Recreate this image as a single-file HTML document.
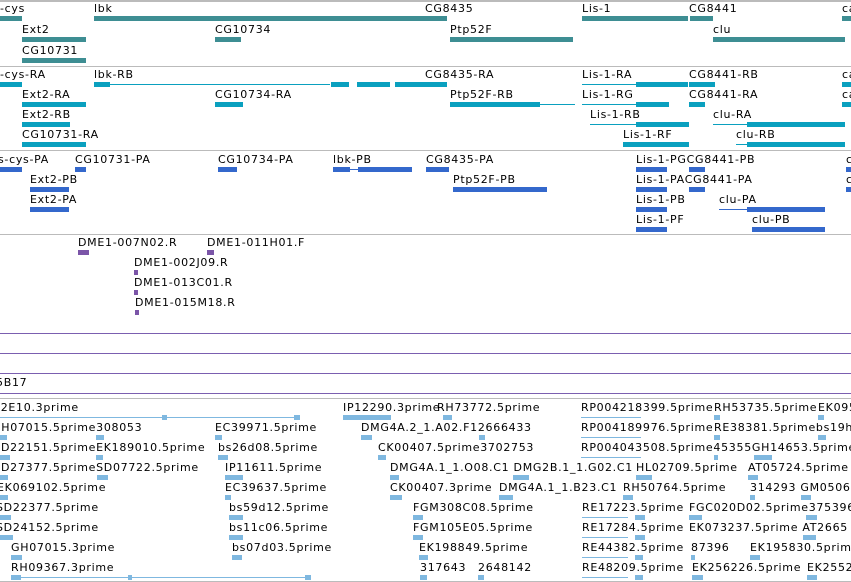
<!DOCTYPE html>
<html><head><style>
body{margin:0;width:851px;height:582px;overflow:hidden;background:#fff;position:relative;font-family:"DejaVu Sans","Liberation Sans",sans-serif}
.t{position:absolute;font-size:11px;line-height:11px;letter-spacing:0.7px;white-space:nowrap;color:#000}
.b{position:absolute;height:5px}
.g{background:#3e8e93}.r{background:#0aa0bf}.p{background:#3468cc}.v{background:#7b55a8}.e{background:#7fb8e0}
.l{position:absolute;height:1px}
.h{position:absolute;left:0;width:851px;height:1px}
</style></head><body>
<div class="h" style="top:0;background:#bbb;height:2px"></div>
<div class="h" style="top:66px;background:#bbb"></div>
<div class="h" style="top:150px;background:#bbb"></div>
<div class="h" style="top:234px;background:#bbb"></div>
<div class="h" style="top:333px;background:#7b5fb0"></div>
<div class="h" style="top:353px;background:#7b5fb0"></div>
<div class="h" style="top:373px;background:#7b5fb0"></div>
<div class="h" style="top:393px;background:#7b5fb0"></div>
<div class="h" style="top:398px;background:#bbb"></div>
<div class="h" style="top:581px;background:#bbb"></div>

<div class="t" style="left:0;top:3px">-cys</div><div class="b g" style="left:0;top:16px;width:22px"></div>
<div class="t" style="left:94px;top:3px">lbk</div><div class="b g" style="left:94px;top:16px;width:330px"></div>
<div class="t" style="left:425px;top:3px">CG8435</div><div class="b g" style="left:422px;top:16px;width:25px"></div>
<div class="t" style="left:582px;top:3px">Lis-1</div><div class="b g" style="left:582px;top:16px;width:106px"></div>
<div class="t" style="left:689px;top:3px">CG8441</div><div class="b g" style="left:690px;top:16px;width:23px"></div>
<div class="t" style="left:842px;top:3px">ca</div><div class="b g" style="left:842px;top:16px;width:9px"></div>
<div class="t" style="left:22px;top:24px">Ext2</div><div class="b g" style="left:22px;top:37px;width:64px"></div>
<div class="t" style="left:215px;top:24px">CG10734</div><div class="b g" style="left:215px;top:37px;width:26px"></div>
<div class="t" style="left:450px;top:24px">Ptp52F</div><div class="b g" style="left:450px;top:37px;width:123px"></div>
<div class="t" style="left:713px;top:24px">clu</div><div class="b g" style="left:713px;top:37px;width:132px"></div>
<div class="t" style="left:22px;top:45px">CG10731</div><div class="b g" style="left:22px;top:58px;width:64px"></div>

<div class="t" style="left:0;top:69px">-cys-RA</div><div class="b r" style="left:0;top:82px;width:22px"></div>
<div class="t" style="left:94px;top:69px">lbk-RB</div><div class="b r" style="left:94px;top:82px;width:16px"></div><div class="l r" style="left:110px;top:84px;width:220px"></div><div class="b r" style="left:331px;top:82px;width:18px"></div><div class="b r" style="left:357px;top:82px;width:33px"></div><div class="b r" style="left:395px;top:82px;width:29px"></div>
<div class="t" style="left:425px;top:69px">CG8435-RA</div><div class="b r" style="left:422px;top:82px;width:25px"></div>
<div class="t" style="left:582px;top:69px">Lis-1-RA</div><div class="l r" style="left:582px;top:84px;width:54px"></div><div class="b r" style="left:636px;top:82px;width:52px"></div>
<div class="t" style="left:689px;top:69px">CG8441-RB</div><div class="b r" style="left:689px;top:82px;width:26px"></div>
<div class="t" style="left:842px;top:69px">ca</div><div class="b r" style="left:842px;top:82px;width:9px"></div>

<div class="t" style="left:22px;top:89px">Ext2-RA</div><div class="b r" style="left:22px;top:102px;width:64px"></div>
<div class="t" style="left:215px;top:89px">CG10734-RA</div><div class="b r" style="left:215px;top:102px;width:28px"></div>
<div class="t" style="left:450px;top:89px">Ptp52F-RB</div><div class="b r" style="left:450px;top:102px;width:90px"></div><div class="l r" style="left:540px;top:104px;width:35px"></div>
<div class="t" style="left:582px;top:89px">Lis-1-RG</div><div class="l r" style="left:582px;top:104px;width:54px"></div><div class="b r" style="left:636px;top:102px;width:33px"></div>
<div class="t" style="left:689px;top:89px">CG8441-RA</div><div class="b r" style="left:689px;top:102px;width:16px"></div>
<div class="t" style="left:842px;top:89px">ca</div><div class="b r" style="left:842px;top:102px;width:9px"></div>

<div class="t" style="left:22px;top:109px">Ext2-RB</div><div class="b r" style="left:22px;top:122px;width:48px"></div>
<div class="t" style="left:590px;top:109px">Lis-1-RB</div><div class="l r" style="left:590px;top:124px;width:46px"></div><div class="b r" style="left:636px;top:122px;width:53px"></div>
<div class="t" style="left:713px;top:109px">clu-RA</div><div class="l r" style="left:713px;top:124px;width:34px"></div><div class="b r" style="left:747px;top:122px;width:98px"></div>

<div class="t" style="left:22px;top:129px">CG10731-RA</div><div class="b r" style="left:22px;top:142px;width:64px"></div>
<div class="t" style="left:623px;top:129px">Lis-1-RF</div><div class="b r" style="left:623px;top:142px;width:66px"></div>
<div class="t" style="left:736px;top:129px">clu-RB</div><div class="l r" style="left:736px;top:144px;width:11px"></div><div class="b r" style="left:747px;top:142px;width:98px"></div>

<div class="t" style="left:-2px;top:154px">s-cys-PA</div><div class="b p" style="left:0;top:167px;width:22px"></div>
<div class="t" style="left:75px;top:154px">CG10731-PA</div><div class="b p" style="left:75px;top:167px;width:11px"></div>
<div class="t" style="left:218px;top:154px">CG10734-PA</div><div class="b p" style="left:218px;top:167px;width:19px"></div>
<div class="t" style="left:333px;top:154px">lbk-PB</div><div class="b p" style="left:333px;top:167px;width:17px"></div><div class="l p" style="left:350px;top:169px;width:8px"></div><div class="b p" style="left:358px;top:167px;width:54px"></div>
<div class="t" style="left:426px;top:154px">CG8435-PA</div><div class="b p" style="left:426px;top:167px;width:23px"></div>
<div class="t" style="left:636px;top:154px">Lis-1-PGCG8441-PB</div><div class="b p" style="left:636px;top:167px;width:31px"></div><div class="b p" style="left:689px;top:167px;width:16px"></div>
<div class="t" style="left:846px;top:154px">c</div><div class="b p" style="left:846px;top:167px;width:5px"></div>

<div class="t" style="left:30px;top:174px">Ext2-PB</div><div class="b p" style="left:30px;top:187px;width:39px"></div>
<div class="t" style="left:453px;top:174px">Ptp52F-PB</div><div class="b p" style="left:453px;top:187px;width:94px"></div>
<div class="t" style="left:636px;top:174px">Lis-1-PACG8441-PA</div><div class="b p" style="left:636px;top:187px;width:31px"></div><div class="b p" style="left:689px;top:187px;width:16px"></div>
<div class="t" style="left:846px;top:174px">c</div><div class="b p" style="left:846px;top:187px;width:5px"></div>

<div class="t" style="left:30px;top:194px">Ext2-PA</div><div class="b p" style="left:30px;top:207px;width:39px"></div>
<div class="t" style="left:636px;top:194px">Lis-1-PB</div><div class="b p" style="left:636px;top:207px;width:31px"></div>
<div class="t" style="left:719px;top:194px">clu-PA</div><div class="l p" style="left:719px;top:209px;width:28px"></div><div class="b p" style="left:747px;top:207px;width:78px"></div>

<div class="t" style="left:636px;top:214px">Lis-1-PF</div><div class="b p" style="left:636px;top:227px;width:31px"></div>
<div class="t" style="left:752px;top:214px">clu-PB</div><div class="b p" style="left:752px;top:227px;width:73px"></div>

<div class="t" style="left:78px;top:237px">DME1-007N02.R</div><div class="b v" style="left:78px;top:250px;width:11px"></div>
<div class="t" style="left:207px;top:237px">DME1-011H01.F</div><div class="b v" style="left:207px;top:250px;width:7px"></div>
<div class="t" style="left:134px;top:257px">DME1-002J09.R</div><div class="b v" style="left:134px;top:270px;width:4px"></div>
<div class="t" style="left:134px;top:277px">DME1-013C01.R</div><div class="b v" style="left:134px;top:290px;width:4px"></div>
<div class="t" style="left:135px;top:297px">DME1-015M18.R</div><div class="b v" style="left:135px;top:310px;width:4px"></div>

<div class="t" style="left:-4px;top:377px">5B17</div>

<div class="t" style="left:-7px;top:402px">32E10.3prime</div><div class="l e" style="left:0;top:417px;width:300px"></div><div class="b e" style="left:162px;top:415px;width:5px"></div><div class="b e" style="left:294px;top:415px;width:6px"></div>
<div class="t" style="left:343px;top:402px">IP12290.3prime</div><div class="b e" style="left:343px;top:415px;width:48px"></div>
<div class="t" style="left:437px;top:402px">RH73772.5prime</div><div class="b e" style="left:443px;top:415px;width:9px"></div>
<div class="t" style="left:581px;top:402px">RP004218399.5prime</div><div class="l e" style="left:581px;top:417px;width:60px"></div>
<div class="t" style="left:714px;top:402px">RH53735.5prime</div><div class="b e" style="left:714px;top:415px;width:6px"></div>
<div class="t" style="left:818px;top:402px">EK095</div><div class="b e" style="left:818px;top:415px;width:6px"></div>

<div class="t" style="left:-8px;top:422px">GH07015.5prime308053</div><div class="b e" style="left:0;top:435px;width:7px"></div><div class="b e" style="left:96px;top:435px;width:8px"></div>
<div class="t" style="left:215px;top:422px">EC39971.5prime</div><div class="b e" style="left:215px;top:435px;width:7px"></div>
<div class="t" style="left:361px;top:422px">DMG4A.2_1.A02.F12666433</div><div class="b e" style="left:361px;top:435px;width:11px"></div><div class="b e" style="left:479px;top:435px;width:6px"></div>
<div class="t" style="left:581px;top:422px">RP004189976.5prime</div><div class="l e" style="left:581px;top:437px;width:60px"></div>
<div class="t" style="left:714px;top:422px">RE38381.5primebs19h</div><div class="b e" style="left:714px;top:435px;width:6px"></div><div class="b e" style="left:818px;top:435px;width:8px"></div>

<div class="t" style="left:1px;top:442px">D22151.5primeEK189010.5prime</div><div class="b e" style="left:0;top:455px;width:10px"></div><div class="b e" style="left:96px;top:455px;width:7px"></div>
<div class="t" style="left:218px;top:442px">bs26d08.5prime</div><div class="b e" style="left:218px;top:455px;width:10px"></div>
<div class="t" style="left:378px;top:442px">CK00407.5prime3702753</div><div class="b e" style="left:378px;top:455px;width:8px"></div>
<div class="t" style="left:581px;top:442px">RP004043508.5prime45355GH14653.5prime</div><div class="l e" style="left:581px;top:457px;width:60px"></div><div class="b e" style="left:714px;top:455px;width:4px"></div><div class="b e" style="left:754px;top:455px;width:18px"></div>

<div class="t" style="left:1px;top:462px">D27377.5primeSD07722.5prime</div><div class="b e" style="left:0;top:475px;width:8px"></div><div class="b e" style="left:97px;top:475px;width:11px"></div>
<div class="t" style="left:225px;top:462px">IP11611.5prime</div><div class="b e" style="left:225px;top:475px;width:18px"></div>
<div class="t" style="left:390px;top:462px">DMG4A.1_1.O08.C1 DMG2B.1_1.G02.C1</div><div class="b e" style="left:390px;top:475px;width:9px"></div><div class="b e" style="left:513px;top:475px;width:16px"></div>
<div class="t" style="left:636px;top:462px">HL02709.5prime</div><div class="b e" style="left:636px;top:475px;width:16px"></div>
<div class="t" style="left:748px;top:462px">AT05724.5prime</div><div class="b e" style="left:748px;top:475px;width:10px"></div>

<div class="t" style="left:-3px;top:482px">EK069102.5prime</div><div class="b e" style="left:0;top:495px;width:8px"></div>
<div class="t" style="left:225px;top:482px">EC39637.5prime</div><div class="b e" style="left:225px;top:495px;width:6px"></div>
<div class="t" style="left:390px;top:482px">CK00407.3prime</div><div class="b e" style="left:390px;top:495px;width:12px"></div>
<div class="t" style="left:499px;top:482px">DMG4A.1_1.B23.C1</div><div class="b e" style="left:499px;top:495px;width:14px"></div>
<div class="t" style="left:623px;top:482px">RH50764.5prime</div><div class="b e" style="left:623px;top:495px;width:10px"></div>
<div class="t" style="left:750px;top:482px">314293 GM0506</div><div class="b e" style="left:750px;top:495px;width:5px"></div><div class="b e" style="left:801px;top:495px;width:10px"></div>

<div class="t" style="left:-4px;top:502px">SD22377.5prime</div><div class="b e" style="left:0;top:515px;width:11px"></div>
<div class="t" style="left:229px;top:502px">bs59d12.5prime</div><div class="b e" style="left:229px;top:515px;width:14px"></div>
<div class="t" style="left:413px;top:502px">FGM308C08.5prime</div><div class="b e" style="left:413px;top:515px;width:10px"></div>
<div class="t" style="left:582px;top:502px">RE17223.5prime</div><div class="l e" style="left:582px;top:517px;width:46px"></div><div class="b e" style="left:635px;top:515px;width:10px"></div>
<div class="t" style="left:689px;top:502px">FGC020D02.5prime375396</div><div class="b e" style="left:689px;top:515px;width:13px"></div><div class="b e" style="left:806px;top:515px;width:11px"></div>

<div class="t" style="left:-4px;top:522px">SD24152.5prime</div><div class="b e" style="left:0;top:535px;width:13px"></div>
<div class="t" style="left:229px;top:522px">bs11c06.5prime</div><div class="b e" style="left:229px;top:535px;width:14px"></div>
<div class="t" style="left:413px;top:522px">FGM105E05.5prime</div><div class="b e" style="left:413px;top:535px;width:10px"></div>
<div class="t" style="left:582px;top:522px">RE17284.5prime</div><div class="l e" style="left:582px;top:537px;width:46px"></div><div class="b e" style="left:635px;top:535px;width:10px"></div>
<div class="t" style="left:689px;top:522px">EK073237.5prime AT2665</div><div class="b e" style="left:803px;top:535px;width:13px"></div>

<div class="t" style="left:11px;top:542px">GH07015.3prime</div><div class="b e" style="left:11px;top:555px;width:11px"></div>
<div class="t" style="left:232px;top:542px">bs07d03.5prime</div><div class="b e" style="left:232px;top:555px;width:10px"></div>
<div class="t" style="left:419px;top:542px">EK198849.5prime</div><div class="b e" style="left:419px;top:555px;width:9px"></div>
<div class="t" style="left:582px;top:542px">RE44382.5prime</div><div class="l e" style="left:582px;top:557px;width:46px"></div><div class="b e" style="left:635px;top:555px;width:8px"></div>
<div class="t" style="left:691px;top:542px">87396</div><div class="b e" style="left:691px;top:555px;width:4px"></div>
<div class="t" style="left:750px;top:542px">EK195830.5prime</div><div class="b e" style="left:750px;top:555px;width:10px"></div>

<div class="t" style="left:11px;top:562px">RH09367.3prime</div><div class="l e" style="left:11px;top:577px;width:300px"></div><div class="b e" style="left:11px;top:575px;width:10px"></div><div class="b e" style="left:128px;top:575px;width:4px"></div><div class="b e" style="left:305px;top:575px;width:6px"></div>
<div class="t" style="left:420px;top:562px">317643</div><div class="b e" style="left:420px;top:575px;width:7px"></div>
<div class="t" style="left:478px;top:562px">2648142</div><div class="b e" style="left:478px;top:575px;width:6px"></div>
<div class="t" style="left:582px;top:562px">RE48209.5prime</div><div class="l e" style="left:582px;top:577px;width:46px"></div><div class="b e" style="left:635px;top:575px;width:8px"></div>
<div class="t" style="left:692px;top:562px">EK256226.5prime</div><div class="b e" style="left:692px;top:575px;width:11px"></div>
<div class="t" style="left:807px;top:562px">EK2552</div><div class="b e" style="left:807px;top:575px;width:10px"></div>
</body></html>
